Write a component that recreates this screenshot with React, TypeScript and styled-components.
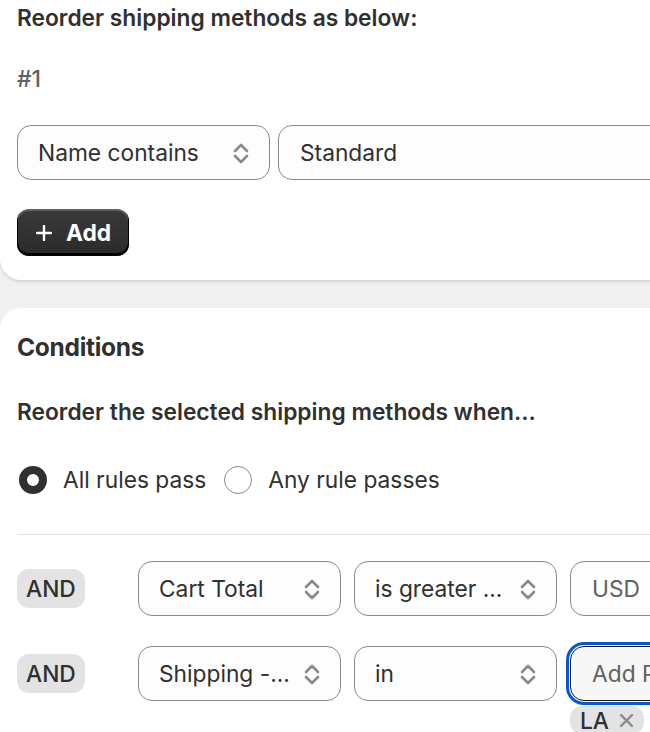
import React from 'react';
import styled, { createGlobalStyle } from 'styled-components';

const GlobalStyle = createGlobalStyle`
  html, body {
    margin: 0;
    padding: 0;
    background: #f1f1f1;
    overflow: hidden;
  }
  body {
    width: 650px;
    height: 732px;
    font-family: Inter, "Noto Sans", sans-serif;
    color: #303030;
    -webkit-font-smoothing: antialiased;
  }
  * { box-sizing: border-box; }
`;

const Page = styled.div`
  display: flex;
  flex-direction: column;
  gap: 28px;
  width: 740px;
`;

const Card = styled.section<{ $top?: boolean }>`
  background: #fff;
  border-radius: ${p => (p.$top ? '0 0 21px 21px' : '21px 21px 0 0')};
  box-shadow: ${p => (p.$top ? '0 2px 3px rgba(26, 26, 26, 0.14)' : 'none')};
  padding: ${p => (p.$top ? '0 28px 24px 17px' : '22px 28px 40px 17px')};
  display: flex;
  flex-direction: column;
`;

const Title = styled.h2`
  margin: 0;
  font-size: 22.75px;
  line-height: 35px;
  font-weight: 600;
`;

const Heading = styled.h2`
  margin: 0;
  font-size: 24.5px;
  line-height: 35px;
  font-weight: 700;
  letter-spacing: -0.3px;
`;

const Muted = styled.div`
  margin-top: 26px;
  font-size: 22.75px;
  line-height: 35px;
  font-weight: 500;
  color: #616161;
`;

const FieldRow = styled.div`
  display: flex;
  gap: 8px;
  margin-top: 29px;
`;

const SelectBox = styled.div<{ $width: number }>`
  width: ${p => p.$width}px;
  flex-shrink: 0;
  height: 55px;
  border: 1px solid #8a8a8a;
  border-radius: 14px;
  background: #fdfdfd;
  display: flex;
  align-items: center;
  justify-content: space-between;
  padding: 0 20px 0 20px;
  font-size: 22.75px;
  color: #303030;
`;

const SelectText = styled.span`
  white-space: nowrap;
  overflow: hidden;
`;

const Input = styled.div<{ $muted?: boolean; $focused?: boolean }>`
  flex: 1 1 auto;
  height: 55px;
  min-height: 55px;
  border: 1px solid ${p => (p.$focused ? '#1a1a1a' : '#8a8a8a')};
  border-radius: 14px;
  background: ${p => (p.$focused ? '#f7f7f7' : '#fdfdfd')};
  display: flex;
  align-items: center;
  padding: 0 21px;
  font-size: 22.75px;
  color: ${p => (p.$muted ? '#616161' : '#303030')};
  white-space: nowrap;
  box-shadow: ${p => (p.$focused ? '0 0 0 1px #fff, 0 0 0 4px #005bd3' : 'none')};
`;

const PrimaryButton = styled.button`
  margin-top: 29px;
  align-self: flex-start;
  height: 47px;
  padding: 0 18px 0 19px;
  display: flex;
  align-items: center;
  gap: 14px;
  border: 0;
  border-radius: 12px;
  background: linear-gradient(#3a3a3a, #2a2a2a);
  box-shadow: inset 0 -2px 0 1px #000, inset 0 1px 0 1px rgba(255, 255, 255, 0.2);
  color: #fff;
  font-family: inherit;
  font-size: 22.75px;
  font-weight: 700;
`;

const Lead = styled.p`
  margin: 29px 0 0;
  font-size: 22.75px;
  line-height: 35px;
  font-weight: 600;
`;

const RadioGroup = styled.div`
  display: flex;
  align-items: center;
  gap: 16px;
  margin-top: 33px;
  height: 35px;
`;

const RadioLabel = styled.label`
  display: flex;
  align-items: center;
  gap: 16px;
  font-size: 22.75px;
  color: #303030;
`;

const RadioDot = styled.span<{ $checked?: boolean }>`
  width: 28px;
  height: 28px;
  margin-left: 2px;
  border-radius: 50%;
  background: #fff;
  border: ${p => (p.$checked ? '8px solid #303030' : '1.5px solid #8a8a8a')};
`;

const Divider = styled.hr`
  margin: 37px 0 0;
  border: 0;
  border-top: 1px solid #e3e3e3;
`;

const ConditionList = styled.div`
  display: flex;
  flex-direction: column;
  gap: 30px;
  margin-top: 26px;
`;

const ConditionRow = styled.div`
  display: grid;
  grid-template-columns: 108px 203px 203px 1fr;
  column-gap: 13px;
  align-items: start;
`;

const BadgeCell = styled.div`
  height: 55px;
  display: flex;
  align-items: center;
`;

const Badge = styled.span`
  height: 39px;
  padding: 0 9px;
  display: inline-flex;
  align-items: center;
  border-radius: 12px;
  background: #e3e3e3;
  font-size: 22.75px;
  font-weight: 450;
  color: #303030;
`;

const ValueCell = styled.div`
  display: flex;
  flex-direction: column;
  align-items: stretch;
  gap: 5px;
`;

const Tag = styled.span`
  align-self: flex-start;
  height: 28px;
  padding: 0 10px;
  display: inline-flex;
  align-items: center;
  gap: 10px;
  border-radius: 12px;
  background: #e3e3e3;
  font-size: 22.75px;
  font-weight: 450;
  color: #303030;
`;

const Chevrons = () => (
  <svg width="16" height="24" viewBox="0 0 16 24" fill="none">
    <polyline points="2,10 8,4 14,10" stroke="#8a8a8a" strokeWidth="2.6" strokeLinecap="round" strokeLinejoin="round" />
    <polyline points="2,15 8,21 14,15" stroke="#8a8a8a" strokeWidth="2.6" strokeLinecap="round" strokeLinejoin="round" />
  </svg>
);

const Plus = () => (
  <svg width="16" height="16" viewBox="0 0 16 16" fill="none">
    <path d="M8 1v14M1 8h14" stroke="#fff" strokeWidth="2.4" strokeLinecap="round" />
  </svg>
);

const Cross = () => (
  <svg width="15" height="15" viewBox="0 0 15 15" fill="none">
    <path d="M2 2l11 11M13 2L2 13" stroke="#8a8a8a" strokeWidth="2.4" strokeLinecap="round" />
  </svg>
);

const Select = ({ label, width = 203 }: { label: string; width?: number }) => (
  <SelectBox $width={width}>
    <SelectText>{label}</SelectText>
    <Chevrons />
  </SelectBox>
);

const conditions = [
  { field: 'Cart Total', op: 'is greater ...', value: 'USD', focused: false, tags: [] as string[] },
  { field: 'Shipping -...', op: 'in', value: 'Add P', focused: true, tags: ['LA'] },
];

export default function App() {
  return (
    <>
      <GlobalStyle />
      <Page>
        <Card $top>
          <Title>Reorder shipping methods as below:</Title>
          <Muted>#1</Muted>
          <FieldRow>
            <Select label="Name contains" width={253} />
            <Input>Standard</Input>
          </FieldRow>
          <PrimaryButton>
            <Plus />
            Add
          </PrimaryButton>
        </Card>

        <Card>
          <Heading>Conditions</Heading>
          <Lead>Reorder the selected shipping methods when...</Lead>
          <RadioGroup>
            <RadioLabel>
              <RadioDot $checked />
              All rules pass
            </RadioLabel>
            <RadioLabel>
              <RadioDot />
              Any rule passes
            </RadioLabel>
          </RadioGroup>
          <Divider />
          <ConditionList>
            {conditions.map(c => (
              <ConditionRow key={c.field}>
                <BadgeCell>
                  <Badge>AND</Badge>
                </BadgeCell>
                <Select label={c.field} />
                <Select label={c.op} />
                <ValueCell>
                  <Input $muted $focused={c.focused}>{c.value}</Input>
                  {c.tags.map(t => (
                    <Tag key={t}>
                      {t}
                      <Cross />
                    </Tag>
                  ))}
                </ValueCell>
              </ConditionRow>
            ))}
          </ConditionList>
        </Card>
      </Page>
    </>
  );
}
